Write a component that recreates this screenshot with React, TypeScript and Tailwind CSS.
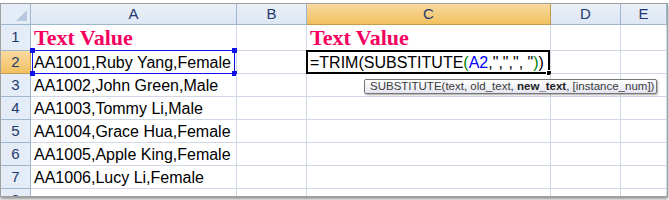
import React from "react";

const cols = ["A", "B", "C", "D", "E"];
const rows: { h: string; a: string; c?: string }[] = [
    { h: "h-[26px]", a: "Text Value", c: "Text Value" },
    { h: "h-[23px]", a: "AA1001,Ruby Yang,Female" },
    { h: "h-[23px]", a: "AA1002,John Green,Male" },
    { h: "h-[23px]", a: "AA1003,Tommy Li,Male" },
    { h: "h-[23px]", a: "AA1004,Grace Hua,Female" },
    { h: "h-[23px]", a: "AA1005,Apple King,Female" },
    { h: "h-[23px]", a: "AA1006,Lucy Li,Female" },
    { h: "h-[23px]", a: "" },
];

const font = { fontFamily: "'Liberation Sans', Arial, sans-serif" };

function Formula() {
    return (
        <span>
            =TRIM(SUBSTITUTE<span className="text-[#008000]">(</span>
            <span className="text-[#0000ff]">A2</span>,",",", "
            <span className="text-[#008000]">)</span>)
        </span>
    );
}

// text-selection frame with the four grab handles
function TextSelection() {
    const handle = "absolute w-[5px] h-[5px] bg-[#1010e8]";
    return (
        <div className="absolute inset-x-[1px] -top-[1px] -bottom-[1px] border border-[#1010e8] pointer-events-none">
            <div className={handle + " -left-[3px] -top-[3px]"} />
            <div className={handle + " -right-[3px] -top-[3px]"} />
            <div className={handle + " -left-[3px] -bottom-[3px]"} />
            <div className={handle + " -right-[3px] -bottom-[3px]"} />
        </div>
    );
}

function ActiveCell() {
    return (
        <div className="absolute -left-[1px] -top-[1px] -right-[0px] -bottom-[1px] border-2 border-black pointer-events-none">
            <div className="absolute -right-[4px] -bottom-[4px] w-[6px] h-[6px] bg-black border border-white" />
        </div>
    );
}

export default function App() {
    return (
        <div className="w-[669px] h-[200px] bg-white overflow-hidden relative" style={font}>
            <div className="mt-[3px] w-[668px] h-[194px] border border-[#a0a0a0] overflow-hidden shadow-[0_2px_3px_rgba(0,0,0,0.45)]">
                <div className="grid grid-cols-[30px_206px_70px_244px_70px_46px]">
                    {/* header row */}
                    <div className="h-[21px] bg-[#e4ecf7] border-r border-b border-[#9eb6ce] flex items-end justify-end p-[3px]">
                        <div className="w-0 h-0 border-l-[11px] border-l-transparent border-b-[11px] border-b-[#b6c9de]" />
                    </div>
                    {cols.map((c) => (
                        <div
                            key={c}
                            className={
                                "h-[21px] border-r border-b text-[15px] flex items-center justify-center " +
                                (c === "C"
                                    ? "bg-gradient-to-b from-[#f9d99f] to-[#f1c15f] border-[#c29b4b] text-[#1e3a6e]"
                                    : "bg-gradient-to-b from-[#eaf0f8] to-[#dde7f3] border-[#9eb6ce] text-[#1e3a6e]")
                            }
                        >
                            {c}
                        </div>
                    ))}
                    {rows.map((r, i) => (
                        <React.Fragment key={i}>
                            <div
                                className={
                                    r.h +
                                    " border-r border-b text-[15px] flex items-center justify-center text-[#1e3a6e] " +
                                    (i === 1
                                        ? "bg-gradient-to-b from-[#f9d99f] to-[#f1c15f] border-[#c29b4b]"
                                        : "bg-[#e4ecf7] border-[#9eb6ce]")
                                }
                            >
                                {i + 1}
                            </div>
                            {cols.map((c) => {
                                let content: React.ReactNode = null;
                                if (c === "A") content = r.a;
                                if (c === "C" && r.c) content = r.c;
                                if (c === "C" && i === 1) content = <Formula />;
                                const heading = i === 0 && content;
                                return (
                                    <div
                                        key={c}
                                        className={
                                            r.h +
                                            " relative border-r border-b border-[#d0d7e5] flex items-end pl-[3px] whitespace-nowrap overflow-visible " +
                                            (heading
                                                ? "text-[22px] leading-[24px] font-bold text-[#f5005f]"
                                                : "text-[16px] leading-[21px] text-black")
                                        }
                                        style={
                                            heading
                                                ? { fontFamily: "'Liberation Serif', 'Times New Roman', serif" }
                                                : undefined
                                        }
                                    >
                                        {content}
                                        {i === 1 && c === "A" && <TextSelection />}
                                        {i === 1 && c === "C" && <ActiveCell />}
                                    </div>
                                );
                            })}
                        </React.Fragment>
                    ))}
                </div>
            </div>

            {/* function tooltip */}
            <div className="absolute left-[364px] top-[79px] w-[293px] h-[15px] rounded-[2px] border border-[#767676] bg-gradient-to-b from-white to-[#e4e5f0] shadow-[1px_1px_2px_rgba(0,0,0,0.35)] text-[11.5px] leading-[13px] text-[#3b3b3b] pl-[5px] whitespace-nowrap">
                SUBSTITUTE(text, old_text, <b className="text-[#222]">new_text</b>, [instance_num])
            </div>
        </div>
    );
}
